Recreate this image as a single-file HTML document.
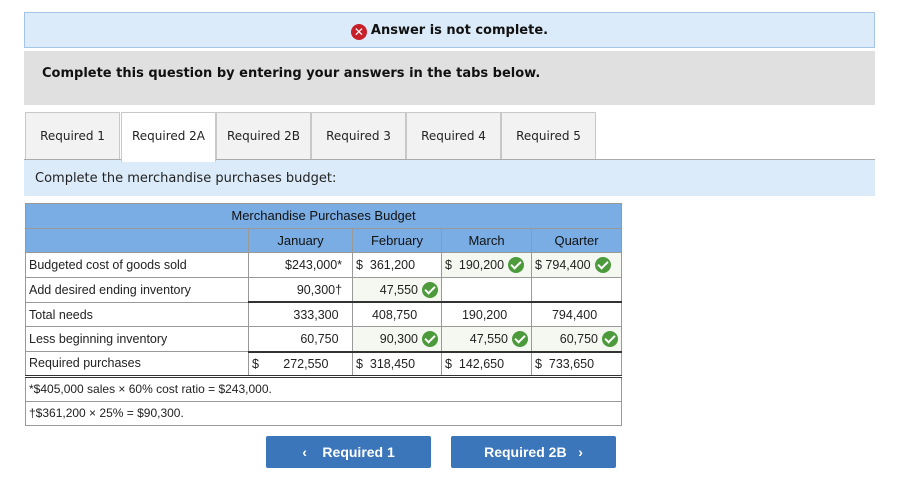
<!DOCTYPE html>
<html><head><meta charset="utf-8"><style>
body{margin:0;width:915px;height:482px;background:#fff;position:relative;overflow:hidden;font-family:"DejaVu Sans","Liberation Sans",sans-serif;}
.a{position:absolute;box-sizing:border-box;}
.tab{position:absolute;top:112px;height:48px;width:93px;background:#f2f2f2;border:1px solid #c8c8c8;border-bottom:none;font-size:12px;color:#222;text-align:center;line-height:46px;}
table{position:absolute;left:25px;top:203px;border-collapse:collapse;font-family:"Liberation Sans",Arial,sans-serif;font-size:12.5px;color:#222;}
td{border:1px solid #999;height:23.5px;padding:0 3px;white-space:nowrap;line-height:14px;box-sizing:border-box;}
tr{height:24.7px;}
.h td{background:#7aade4;text-align:center;font-weight:normal;color:#111;font-size:13px;}
.r{text-align:right;}
.g{background:#f5f8f1;}
.ck{display:inline-block;width:16px;height:16px;border-radius:50%;background:#4c9a3c;vertical-align:-4px;margin-left:4px;position:relative;}
.ck:after{content:"";position:absolute;left:5px;top:2px;width:4px;height:8px;border:solid #fff;border-width:0 2px 2px 0;transform:rotate(45deg);}
.tb td{border-top:2px solid #333;}
.btn{position:absolute;top:436px;height:32px;background:#3b76bb;color:#fff;font-family:"Liberation Sans",Arial,sans-serif;font-weight:bold;font-size:14px;text-align:center;line-height:32px;border-radius:2px;}
</style></head><body>
<div class="a" style="left:24px;top:12px;width:851px;height:36px;background:#dbebf9;border:1px solid #a6c5e6;text-align:center;line-height:36px;font-size:13px;font-weight:bold;color:#111;"><span style="display:inline-block;width:16px;height:16px;border-radius:50%;background:#c8202a;color:#fff;font-size:12px;line-height:16px;vertical-align:-2px;margin-right:4px;">✕</span>Answer is not complete.</div>
<div class="a" style="left:24px;top:51px;width:851px;height:54px;background:#e0e0e0;font-size:13px;font-weight:bold;color:#111;padding-left:18px;line-height:46px;">Complete this question by entering your answers in the tabs below.</div>
<div class="tab" style="left:25px">Required 1</div>
<div class="tab" style="left:121px;background:#fff;height:49px;z-index:2">Required 2A</div>
<div class="tab" style="left:216px">Required 2B</div>
<div class="tab" style="left:311px">Required 3</div>
<div class="tab" style="left:406px">Required 4</div>
<div class="tab" style="left:501px">Required 5</div>
<div class="a" style="left:24px;top:159px;width:851px;height:1px;background:#aaa"></div>
<div class="a" style="left:24px;top:160px;width:851px;height:36px;background:#dbebf9;font-size:13px;color:#222;padding-left:11px;line-height:38px;">Complete the merchandise purchases budget:</div>
<table>
<tr class="h"><td colspan="5">Merchandise Purchases Budget</td></tr>
<tr class="h"><td style="width:223px"></td><td style="width:104px">January</td><td style="width:89px">February</td><td style="width:90px">March</td><td style="width:90px">Quarter</td></tr>
<tr><td>Budgeted cost of goods sold</td><td class="r">$243,000*&nbsp;&nbsp;</td><td>$ &nbsp;361,200</td><td class="g">$ &nbsp;190,200<span class="ck"></span></td><td class="g">$ 794,400<span class="ck"></span></td></tr>
<tr><td>Add desired ending inventory</td><td class="r">90,300†&nbsp;&nbsp;</td><td class="r g">47,550<span class="ck"></span></td><td></td><td></td></tr>
<tr class="tb"><td style="border-top:1px solid #999">Total needs</td><td class="r">333,300&nbsp;&nbsp;&nbsp;</td><td class="r">408,750&nbsp;&nbsp;&nbsp;&nbsp;&nbsp;&nbsp;</td><td class="r">190,200&nbsp;&nbsp;&nbsp;&nbsp;&nbsp;&nbsp;</td><td class="r">794,400&nbsp;&nbsp;&nbsp;&nbsp;&nbsp;&nbsp;</td></tr>
<tr><td>Less beginning inventory</td><td class="r">60,750&nbsp;&nbsp;&nbsp;</td><td class="r g">90,300<span class="ck"></span></td><td class="r g">47,550<span class="ck"></span></td><td class="r g">60,750<span class="ck"></span></td></tr>
<tr class="tb" style="border-bottom:3px double #333"><td style="border-top:1px solid #999">Required purchases</td><td>$&nbsp;&nbsp;&nbsp;&nbsp;&nbsp;&nbsp;&nbsp;272,550</td><td>$ &nbsp;318,450</td><td>$ &nbsp;142,650</td><td>$ &nbsp;733,650</td></tr>
<tr><td colspan="5" style="font-size:12px">*$405,000 sales × 60% cost ratio = $243,000.</td></tr>
<tr><td colspan="5" style="font-size:12px">†$361,200 × 25% = $90,300.</td></tr>
</table>
<div class="btn" style="left:266px;width:165px">&lsaquo;&nbsp;&nbsp;&nbsp; Required 1</div>
<div class="btn" style="left:451px;width:165px">Required 2B &nbsp;&nbsp;&rsaquo;</div>
</body></html>
